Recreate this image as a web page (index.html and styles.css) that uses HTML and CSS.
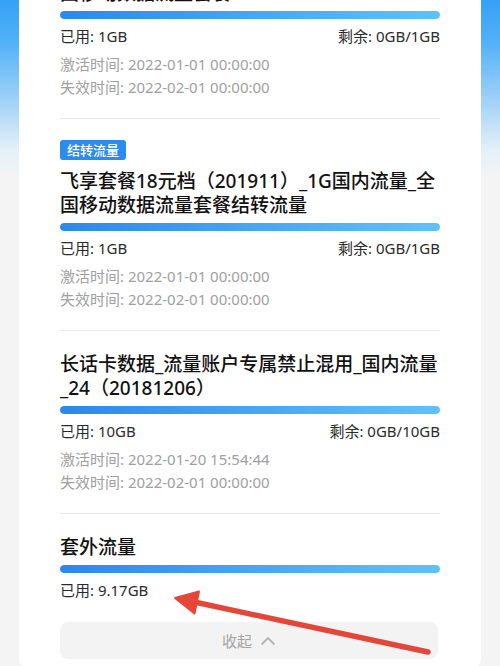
FILE: index.html
```html
<!DOCTYPE html>
<html lang="zh-CN">
<head>
    <meta charset="UTF-8">
    <meta name="viewport" content="width=device-width, initial-scale=1.0">
    <title>流量详情</title>
    <link rel="stylesheet" href="styles.css">
</head>
<body>
    <div class="flow-card">
        <div class="flow-item">
            <div class="flow-title">飞享套餐18元档（201911）_1G国内流量_全国移动数据流量套餐</div>
            <div class="flow-bar"><div class="flow-bar-fill" style="width: 100%"></div></div>
            <div class="flow-usage">
                <span>已用: 1GB</span>
                <span>剩余: 0GB/1GB</span>
            </div>
            <div class="flow-dates">
                <div>激活时间: 2022-01-01 00:00:00</div>
                <div>失效时间: 2022-02-01 00:00:00</div>
            </div>
        </div>

        <div class="flow-item">
            <span class="flow-tag">结转流量</span>
            <div class="flow-title">飞享套餐18元档（201911）_1G国内流量_全国移动数据流量套餐结转流量</div>
            <div class="flow-bar"><div class="flow-bar-fill" style="width: 100%"></div></div>
            <div class="flow-usage">
                <span>已用: 1GB</span>
                <span>剩余: 0GB/1GB</span>
            </div>
            <div class="flow-dates">
                <div>激活时间: 2022-01-01 00:00:00</div>
                <div>失效时间: 2022-02-01 00:00:00</div>
            </div>
        </div>

        <div class="flow-item">
            <div class="flow-title">长话卡数据_流量账户专属禁止混用_国内流量_24（20181206）</div>
            <div class="flow-bar"><div class="flow-bar-fill" style="width: 100%"></div></div>
            <div class="flow-usage">
                <span>已用: 10GB</span>
                <span>剩余: 0GB/10GB</span>
            </div>
            <div class="flow-dates">
                <div>激活时间: 2022-01-20 15:54:44</div>
                <div>失效时间: 2022-02-01 00:00:00</div>
            </div>
        </div>

        <div class="flow-item last">
            <div class="flow-title">套外流量</div>
            <div class="flow-bar"><div class="flow-bar-fill" style="width: 100%"></div></div>
            <div class="flow-usage">
                <span>已用: 9.17GB</span>
            </div>
        </div>

        <button class="collapse-btn">
            收起
            <svg width="16" height="10" viewBox="0 0 16 10">
                <polyline points="1.5,8.5 8,2 14.5,8.5" fill="none" stroke="#b4b4b4" stroke-width="1.8"/>
            </svg>
        </button>
    </div>

    <!-- annotation arrow -->
    <svg class="mark-arrow" width="500" height="666" viewBox="0 0 500 666">
        <line x1="428" y1="652" x2="192" y2="601.5" stroke="#e4473a" stroke-width="5.5" stroke-linecap="round"/>
        <polygon points="175,598 199,591.5 194.5,613.5" fill="#e4473a" stroke="#e4473a" stroke-width="2" stroke-linejoin="round"/>
    </svg>
</body>
</html>
```

FILE: styles.css
```css
* {
    box-sizing: border-box;
    margin: 0;
    padding: 0;
}

body {
    font-family: 'Noto Sans', 'Noto Sans CJK SC', sans-serif;
    background: linear-gradient(180deg, #35a1f6 0px, #4fb0f7 40px, #9fd1f7 100px, #e4f0f8 150px, #f4f4f4 178px) no-repeat;
    background-color: #f4f4f4;
    min-height: 666px;
    overflow: hidden;
}

.flow-card {
    margin: -64px 19px 0;
    padding: 0 41px 10px;
    background: #fff;
    border-radius: 10px;
}

.flow-item {
    padding: 21px 0 19px;
    border-bottom: 1px solid #e8e8e8;
}

.flow-item.last {
    border-bottom: none;
    padding-bottom: 21px;
}

.flow-tag {
    display: inline-block;
    height: 20px;
    line-height: 20px;
    padding: 0 7px;
    margin-bottom: 9px;
    font-family: 'Noto Sans CJK SC', sans-serif;
    font-size: 13px;
    font-weight: 500;
    color: #fff;
    background: #2b8cf0;
    border-radius: 3px;
    vertical-align: top;
}

.flow-title {
    font-family: 'Noto Sans', 'Noto Sans CJK SC', sans-serif;
    font-size: 19px;
    font-weight: 500;
    line-height: 24px;
    color: #111;
}

.flow-bar {
    height: 8px;
    margin-top: 6px;
    border-radius: 4px;
    background: #e6eef8;
    overflow: hidden;
}

.flow-bar-fill {
    height: 100%;
    border-radius: 4px;
    background: linear-gradient(90deg, #2a88ee 0%, #47a9f6 55%, #5dc2fb 100%);
}

.flow-usage {
    display: flex;
    justify-content: space-between;
    margin-top: 6px;
    font-size: 15px;
    line-height: 22px;
    color: #2a2a2a;
}

.flow-dates {
    margin-top: 6px;
    font-size: 15px;
    line-height: 23px;
    color: #a0a0a0;
}

.collapse-btn {
    display: flex;
    align-items: center;
    justify-content: center;
    gap: 8px;
    width: 378px;
    height: 37px;
    border: none;
    border-radius: 8px;
    background: #f3f3f3;
    font-family: 'Noto Sans CJK SC', sans-serif;
    font-size: 15px;
    color: #a3a3a3;
}

.mark-arrow {
    position: absolute;
    top: 0;
    left: 0;
    pointer-events: none;
}
```
